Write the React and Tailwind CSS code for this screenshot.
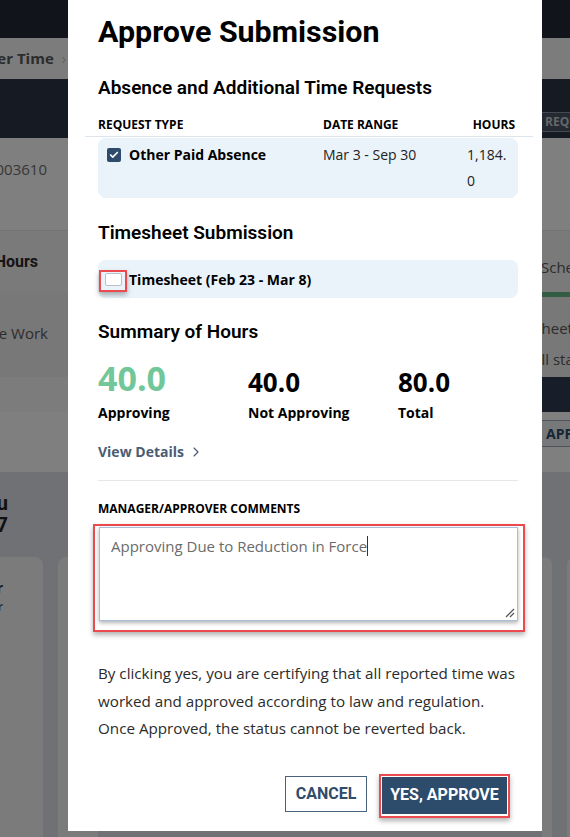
import { Check, ChevronRight } from 'lucide-react';

// Background page (dimmed by overlay) — only the edges peek out around the modal
const EdgeRow = ({ className, left, right }) => (
    <div className={`flex justify-between ${className}`}>
        <div className="w-[68px] overflow-hidden flex justify-end items-center">{left}</div>
        <div className="w-[29px] overflow-hidden flex items-center">{right}</div>
    </div>
);

const Background = () => (
    <div className="min-h-screen bg-[#fefefe] font-['Open_Sans',sans-serif] text-[#4a4a4a]">
        <div className="h-[38px] bg-[#232834]" />
        <EdgeRow
            className="h-[41px] bg-[#f8f8f8]"
            left={
                <div className="flex items-center whitespace-nowrap pr-[2px]">
                    <span className="text-[15px] font-bold text-[#585858]">Other Time</span>
                    <span className="ml-[8px] text-[14px] text-[#c8c8c8]">›</span>
                </div>
            }
        />
        <EdgeRow
            className="h-[59px] bg-[#2c3545]"
            right={
                <div className="mt-[26px] h-[20px] pl-[3px] pr-1 bg-[#4a5465] border-y border-l border-[#8a94a4] text-[12px] font-bold text-[#c9ced6] whitespace-nowrap">
                    REQUEST
                </div>
            }
        />
        <EdgeRow
            className="h-[92px] bg-[#fefefe] items-start"
            left={<span className="mt-[20px] pr-[21px] text-[15px] text-[#707070] whitespace-nowrap">AS003610</span>}
        />
        <EdgeRow
            className="h-[62px] bg-[#f4f4f4] border-t border-[#e6e6e6]"
            left={<span className="pr-[30px] text-[16px] font-bold font-['Roboto',sans-serif] text-[#2a2a2a] whitespace-nowrap">Total Hours</span>}
            right={<span className="pt-[12px] text-[15px] text-[#5a5a5a] whitespace-nowrap">Schedule</span>}
        />
        <EdgeRow
            className="h-[85px] bg-[#f0f0f0] items-start"
            left={<span className="mt-[30px] pr-[20px] text-[15px] text-[#5a5a5a] whitespace-nowrap">Remote Work</span>}
            right={
                <div className="w-full">
                    <div className="h-[5px] bg-[#66b98a]" />
                    <div className="mt-[20px] -ml-[41px] text-[15px] text-[#5a5a5a] whitespace-nowrap">Timesheet</div>
                    <div className="mt-[8px] -ml-[9px] text-[15px] text-[#5a5a5a] whitespace-nowrap">All status</div>
                </div>
            }
        />
        <EdgeRow
            className="h-[35px] bg-[#f8f8f8]"
            right={<div className="w-full h-full bg-[#2f3d52]" />}
        />
        <EdgeRow
            className="h-[60px] bg-[#fefefe] items-start"
            right={
                <div className="mt-[8px] h-[27px] w-full pl-[4px] bg-[#eef0f2] border-y border-l border-[#9aa6b4] text-[14px] font-bold text-[#2d4b6a] flex items-center whitespace-nowrap">
                    APPROVE
                </div>
            }
        />
        <div className="h-[85px] bg-[#dee2e8] flex">
            <div className="w-[68px] overflow-hidden flex justify-end pr-[60px] pt-[20px]">
                <div className="text-[20px] font-bold leading-[22px] text-[#222] text-right whitespace-nowrap font-['Roboto',sans-serif]">
                    Thu
                    <br />
                    27
                </div>
            </div>
        </div>
        <div className="bg-[#dee2e8] flex justify-between h-[290px]">
            <div className="flex gap-[15px] -ml-[150px]">
                <div className="w-[193px] h-full bg-[#f6f6f6] rounded-lg pt-[20px] pr-[40px] text-right">
                    <div className="text-[14px] font-bold text-[#333]">Regular</div>
                    <div className="text-[12px] font-bold text-[#666]">Calendar</div>
                </div>
                <div className="w-[40px] h-full bg-[#f6f6f6] rounded-lg" />
            </div>
            <div className="flex gap-[15px] w-[28px] overflow-hidden">
                <div className="shrink-0 w-[10px] h-full bg-[#f6f6f6] rounded-r-lg" />
                <div className="shrink-0 w-[40px] h-full bg-[#f6f6f6] rounded-lg" />
            </div>
        </div>
    </div>
);

const RedFrame = ({ className, children }) => (
    <div className={`border-2 border-[#eb4a4f] shadow-[0_3px_5px_rgba(0,0,0,0.3)] ${className}`}>{children}</div>
);

const ApproveModal = () => (
    <div className="fixed left-[68px] top-0 w-[474px] h-[831px] bg-white pl-[30px] pr-[24px] pt-[14px] font-['Open_Sans',sans-serif] text-[#1a1a1a]">
        <h1 className="text-[30.4px] leading-[36px] font-bold font-['Roboto',sans-serif] text-black">Approve Submission</h1>

        {/* Absence requests table */}
        <h2 className="mt-[26px] text-[19px] leading-[24px] font-semibold font-['Roboto',sans-serif] text-black">
            Absence and Additional Time Requests
        </h2>
        <div className="mt-[17px] -ml-[13px] -mr-[15px] pl-[13px] pr-[18px] pb-[3px] border-b border-[#dce5ee] flex text-[12px] leading-[16px] font-bold text-black uppercase">
            <div className="w-[225px]">Request Type</div>
            <div className="flex-1">Date Range</div>
            <div>Hours</div>
        </div>
        <div className="mt-px bg-[#eaf2fa] rounded-lg py-[4px] pl-[9px] flex text-[14px] leading-[26px]">
            <div className="w-[216px] flex items-start gap-[8px]">
                <span className="mt-[6px] w-[14px] h-[14px] bg-[#2f4b6b] rounded-[2px] flex items-center justify-center">
                    <Check className="w-[10px] h-[10px] text-white" strokeWidth={4} />
                </span>
                <span className="font-bold text-black">Other Paid Absence</span>
            </div>
            <div className="w-[144px] text-[#222]">Mar 3 - Sep 30</div>
            <div className="text-[#222]">
                1,184.
                <br />0
            </div>
        </div>

        {/* Timesheet */}
        <h2 className="mt-[23px] text-[19px] leading-[24px] font-semibold font-['Roboto',sans-serif] text-black">Timesheet Submission</h2>
        <div className="mt-[15px] h-[38px] bg-[#eaf2fa] rounded-lg flex items-center">
            <RedFrame className="ml-px mt-[3px] w-[28px] h-[22px] flex items-start justify-end pr-[3px] pt-[1px]">
                <span className="w-[17px] h-[13px] bg-white border border-[#b9c0c8] rounded-[2px]" />
            </RedFrame>
            <span className="ml-[2px] text-[14px] font-bold text-black">Timesheet (Feb 23 - Mar 8)</span>
        </div>

        {/* Summary */}
        <h2 className="mt-[22px] text-[19px] leading-[24px] font-semibold font-['Roboto',sans-serif] text-black">Summary of Hours</h2>
        <div className="mt-[17px] flex">
            <div className="w-[150px]">
                <div className="h-[34px] flex items-end">
                    <span className="text-[34px] leading-[34px] font-bold text-[#72c79a]">40.0</span>
                </div>
                <div className="mt-[8px] text-[14px] leading-[20px] font-bold text-black">Approving</div>
            </div>
            <div className="w-[150px]">
                <div className="h-[34px] flex items-end">
                    <span className="text-[26px] leading-[26px] font-bold text-black">40.0</span>
                </div>
                <div className="mt-[8px] text-[14px] leading-[20px] font-bold text-black">Not Approving</div>
            </div>
            <div>
                <div className="h-[34px] flex items-end">
                    <span className="text-[26px] leading-[26px] font-bold text-black">80.0</span>
                </div>
                <div className="mt-[8px] text-[14px] leading-[20px] font-bold text-black">Total</div>
            </div>
        </div>
        <button className="mt-[19px] flex items-center gap-[4px] text-[14px] leading-[20px] font-bold text-[#4a5d74]">
            View Details
            <ChevronRight className="w-[16px] h-[16px]" strokeWidth={1.75} />
        </button>
        <div className="mt-[18px] border-t border-[#e5e7eb]" />

        {/* Comments */}
        <div className="mt-[20px] text-[12px] leading-[16px] font-bold text-black uppercase">Manager/Approver Comments</div>
        <RedFrame className="mt-[7px] -ml-[5px] -mr-[7px] pl-[4px] pr-[5px] pt-px pb-[9px]">
            <div className="relative h-[94px] border border-[#a7bfd8] shadow-[0_2px_4px_rgba(0,0,0,0.3)] bg-white px-[11px] pt-[6px] text-[15px] leading-[24px] text-[#6b6b6b]">
                Approving Due to Reduction in Force
                <span className="inline-block w-px h-[20px] bg-[#333] align-middle -mt-[3px]" />
                <svg className="absolute right-[2px] bottom-[2px]" width="11" height="11" viewBox="0 0 11 11">
                    <path d="M10 2 L2 10 M10 6 L6 10" stroke="#555" strokeWidth="1.2" />
                </svg>
            </div>
        </RedFrame>

        <p className="mt-[28px] text-[15.2px] leading-[27.5px] text-[#2b2b2b]">
            By clicking yes, you are certifying that all reported time was worked and approved according to law and regulation. Once
            Approved, the status cannot be reverted back.
        </p>

        {/* Footer actions */}
        <div className="mt-[31px] flex justify-end items-start gap-[12px] pr-[8px] font-['Roboto',sans-serif]">
            <button className="mt-[2px] w-[82px] h-[36px] border border-[#46627f] bg-white text-[16px] font-bold text-[#2f4c6b] uppercase">
                Cancel
            </button>
            <RedFrame className="p-px pb-[2px]">
                <button className="w-[125px] h-[37px] bg-[#2d4b6a] text-[16px] font-bold text-white uppercase">Yes, Approve</button>
            </RedFrame>
        </div>
    </div>
);

export default function App() {
    return (
        <div className="relative">
            <Background />
            <div className="fixed inset-0 bg-black/50" />
            <ApproveModal />
        </div>
    );
}
